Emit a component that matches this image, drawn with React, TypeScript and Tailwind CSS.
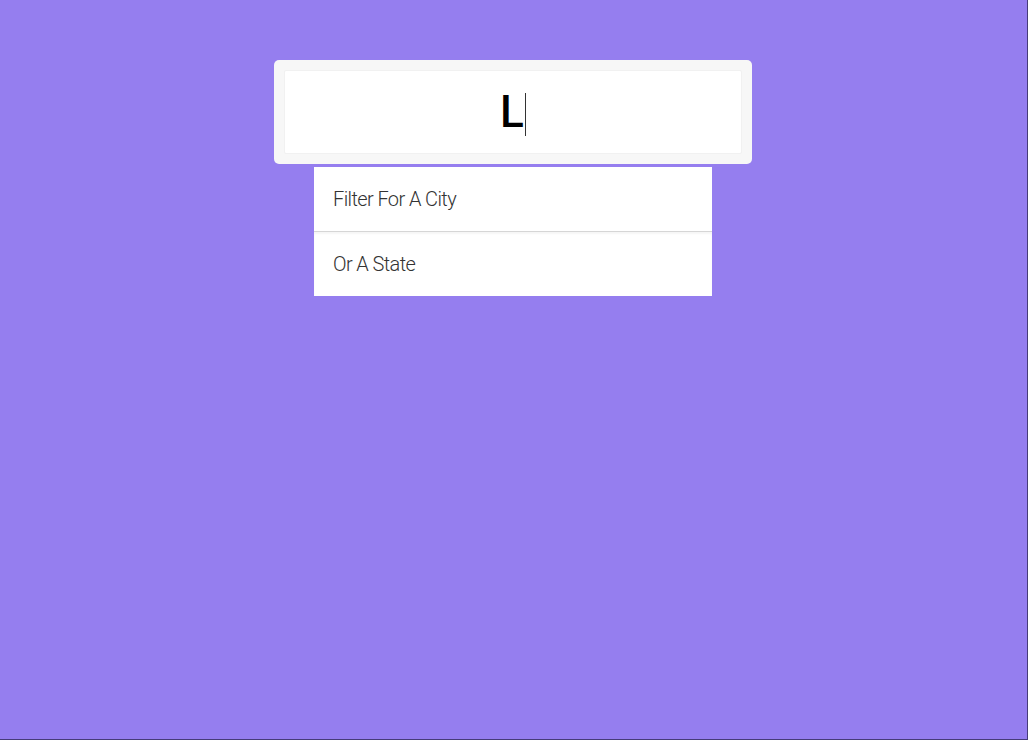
import { useState } from "react";

const hints = ["Filter For A City", "Or A State"];

export default function App() {
  const [query] = useState("L");

  return (
    <div className="min-h-[740px] w-full bg-[#957eef] shadow-[inset_-1px_-1px_0_#463c78] pt-[60px] font-['Roboto',sans-serif]">
      <form className="mx-auto w-[478px] -translate-x-px" onSubmit={(e) => e.preventDefault()}>
        {/* search box */}
        <div className="rounded-[5px] bg-[#f7f7f7] p-[10px]">
          <div className="flex h-[84px] w-full items-center justify-center rounded-[2px] border border-[#f1f1f1] bg-white">
            <span className="text-[44px] font-medium leading-none text-black font-['Roboto',sans-serif]">
              {query}
            </span>
            <span className="mb-[-4px] ml-[1px] h-[43px] w-px bg-[#333]" />
          </div>
        </div>

        {/* suggestions */}
        <ul className="mx-auto mt-[3px] w-[398px]">
          {hints.map((h, i) => (
            <li
              key={h}
              className={
                "flex items-center bg-white px-[19px] text-[20px] font-light text-[#333] tracking-[-0.6px] " +
                (i > 0
                  ? "h-[65px] border-t border-[#d6d6d6] shadow-[inset_0_2px_2px_rgba(0,0,0,0.04)]"
                  : "h-[64px]")
              }
            >
              {h}
            </li>
          ))}
        </ul>
      </form>
    </div>
  );
}
